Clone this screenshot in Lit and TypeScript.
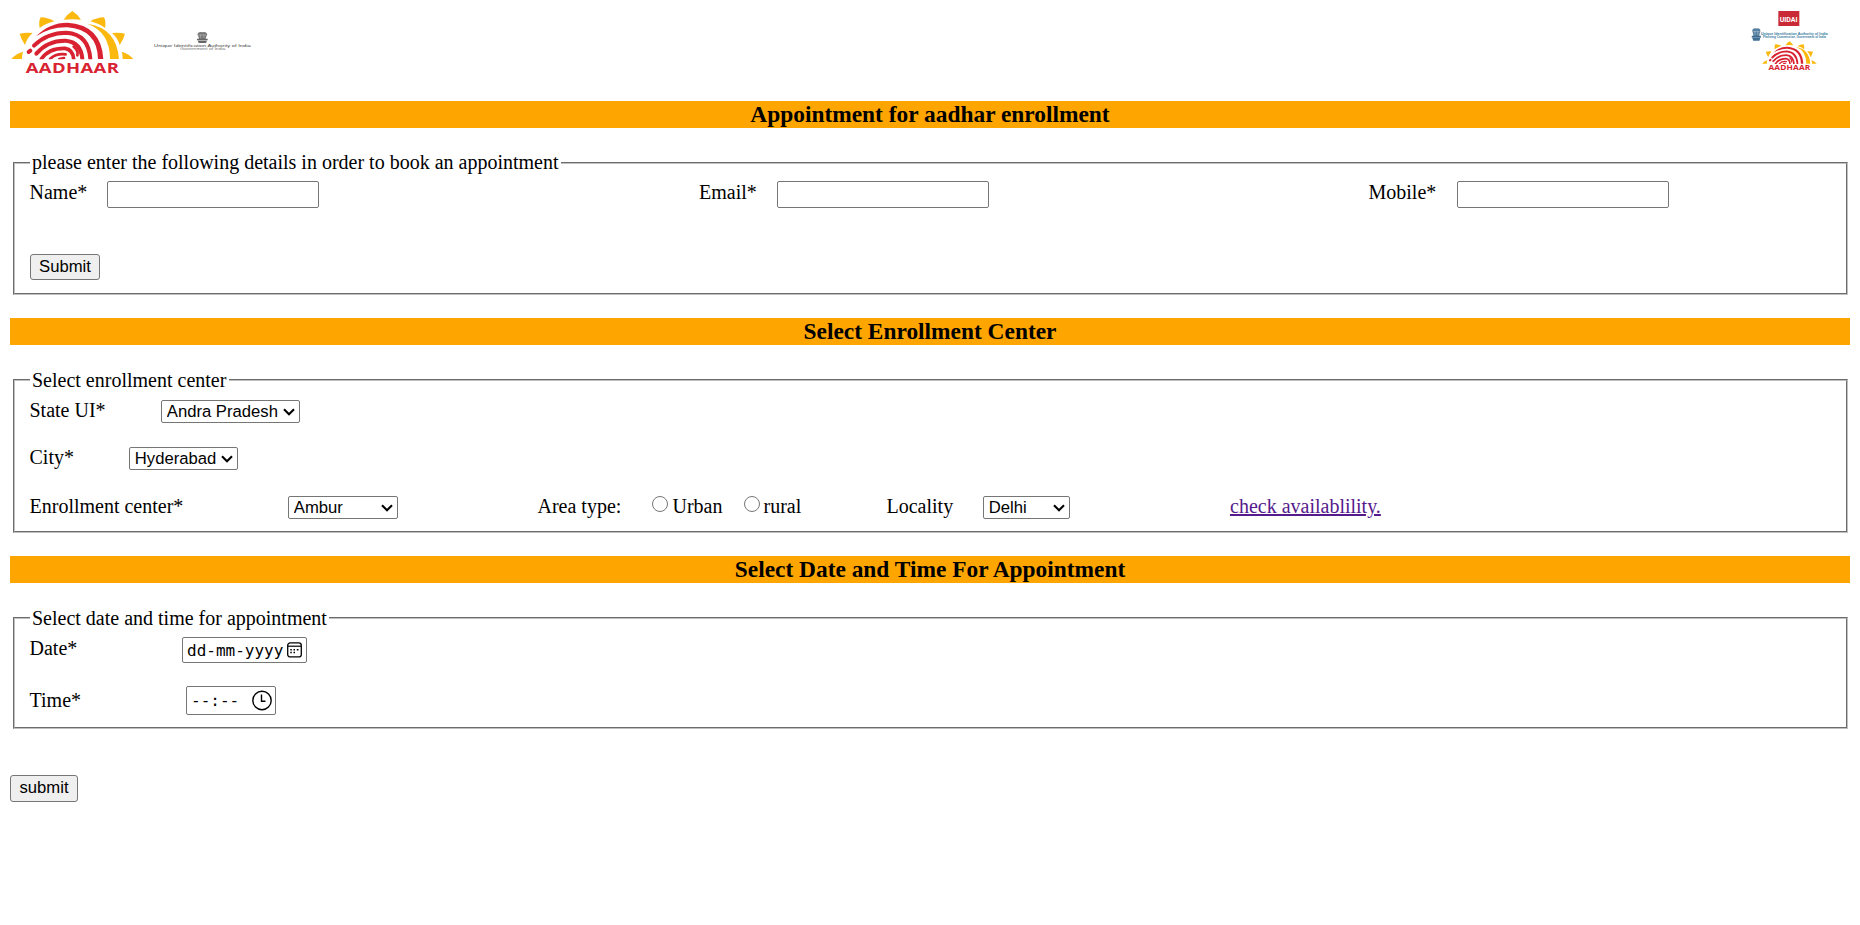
import { LitElement, html, svg, css } from "lit";
import { customElement, property } from "lit/decorators.js";

const sidePetals = () => svg`
  <path d="M122 52Q145 53 163 64Q137 70 119 84Q115 66 122 52Z"/>
  <path d="M59 101Q77 96 98 99Q81 114 75 135Q63 118 59 101Z"/>
  <path d="M34 177Q48 161 69 155Q65 166 66 177Z"/>`;

/* Sun of petals round a fingerprint, over the word mark. */
const aadhaarMark = () => svg`
  <g fill="#fbb80f">
    <path d="M217 33Q233 43 243 59Q217 56 191 59Q201 43 217 33Z"/>
    <g>${sidePetals()}</g>
    <g transform="translate(434 0) scale(-1 1)">${sidePetals()}</g>
    <path d="M262 71Q350 84 357 177H330Q330 96 262 71Z"/>
  </g>
  <path d="M108 109Q148 68 202 68Q304 74 310 177H294Q292 89 202 82Q150 81 108 109Z" fill="#d92231"/>
  <g fill="none" stroke="#d92231" stroke-width="12" stroke-linecap="round">
    <path d="M102 137Q141 98 200 98Q266 103 271 177"/>
    <path d="M86 156L91 152"/>
    <path d="M109 161Q143 121 197 122Q243 126 247 177"/>
    <path d="M124 177Q146 144 195 145Q219 149 221 177" stroke-width="11"/>
    <path d="M221 140Q236 152 232 166" stroke-width="8"/>
    <path d="M150 177Q167 160 197 163" stroke-width="8"/>
    <path d="M178 177L192 174" stroke-width="8"/>
  </g>
  <path d="M60 178H380V187H60Z" fill="#fff"/>
  <text transform="translate(77 218) scale(1.32 1)" textLength="212" class="mark">AADHAAR</text>`;

const emblem = (color: string) => svg`
  <g fill="${color}">
    <path d="M-13-14Q-17-8-12-4L-10 4H10L12-4Q17-8 13-14Q7-18 0-16Q-7-18-13-14Z" opacity=".8"/>
    <path d="M-16 3H16V8H-16Z M-14 9H14L11 16H-11Z" opacity=".9"/>
  </g>
  <path d="M-5-10V2M5-10V2M-12-8H12" stroke="#fff" stroke-width="1.5" opacity=".6"/>`;

@customElement("choice-box")
export class ChoiceBox extends LitElement {
  @property() value = "";

  static styles = css`
    :host { display: grid; height: 23px; }
    .select, .arrow { grid-area: 1 / 1; }
    .select {
      appearance: none;
      box-sizing: border-box;
      width: 100%;
      height: 23px;
      margin: 0;
      padding: 0 0 0 4.8px;
      border: 1px solid #767676;
      border-radius: 2px;
      background: #fff;
      color: #000;
      font: 16.67px "Liberation Sans", Arial, sans-serif;
    }
    .arrow {
      justify-self: end;
      align-self: center;
      margin-right: 5px;
      pointer-events: none;
    }
  `;

  render() {
    return html`
      <select class="select"><option>${this.value}</option></select>
      <svg class="arrow" width="12" height="8" viewBox="0 0 12 8">
        <path d="M1 1.2L6 6.2L11 1.2" fill="none" stroke="#000" stroke-width="2.1"/>
      </svg>`;
  }
}

@customElement("app-root")
export class AppRoot extends LitElement {
  static styles = css`
    :host {
      display: block;
      color: #000;
      background: #fff;
      font: 20px/20px "Liberation Serif", "Times New Roman", serif;
    }
    .page { padding: 0 10px; height: 925px; box-sizing: border-box; overflow: hidden; }
    .header { display: flex; justify-content: space-between; height: 101px; margin: 0 -10px; }
    .header svg { display: block; }
    .mark { font: bold 42px "Open Sans", "Noto Sans", sans-serif; fill: #d92231; }
    .tiny { font: 11px "Liberation Sans", Arial, sans-serif; fill: #444; }
    .planning { font: bold 11px "Liberation Sans", Arial, sans-serif; fill: #387aa0; }
    .uidai { font: bold 24px "Roboto", sans-serif; fill: #fff; }
    .bar {
      height: 27px;
      margin: 0;
      background: orange;
      text-align: center;
      font-size: 23.4px;
      line-height: 27px;
      font-weight: bold;
    }
    .group {
      box-sizing: border-box;
      margin: 24px 2px 23px 3px;
      padding: 0 15px 0 14.5px;
      border: 2px groove #c0c0c0;
      min-width: 0;
    }
    .contact { height: 143px; }
    .center { height: 164px; }
    .schedule { height: 122px; margin-bottom: 46px; }
    .legend { padding: 0 2.5px; margin: 0; height: 22px; white-space: nowrap; }
    .center .legend, .schedule .legend { line-height: 22px; }
    .row { display: grid; align-items: start; white-space: nowrap; }
    .fields { grid-template-columns: 77px 592.5px 77.5px 592px 88px 212px; padding-top: 7px; }
    .fields label, .date label { line-height: 22px; }
    .time label { line-height: 28px; }
    .state { grid-template-columns: 131.5px 139px; padding-top: 9px; }
    .city { grid-template-columns: 99.5px 109px; padding-top: 24px; }
    .place {
      grid-template-columns: 258.5px 110px 139.5px 114px 21px 71px 20px 123px 96.5px 87px 160px auto;
      padding-top: 26px;
    }
    .date { grid-template-columns: 152.5px 125px; padding-top: 8px; }
    .time { grid-template-columns: 156.5px 90px; padding-top: 23px; }
    .text {
      box-sizing: border-box;
      width: 212px;
      height: 27px;
      margin: 0;
      border: 1px solid #767676;
      border-radius: 2px;
      background: #fff;
      font: 16.67px "Liberation Sans", Arial, sans-serif;
    }
    .button {
      display: block;
      box-sizing: border-box;
      padding: 0 0 1px;
      border: 1px solid #767676;
      border-radius: 3px;
      background: #efefef;
      color: #000;
      font: 16.67px "Liberation Sans", Arial, sans-serif;
    }
    .book { width: 70px; height: 26px; margin: 46px 0 0; padding-left: 1px; }
    .finish { width: 68px; height: 27px; }
    .radio { width: 16px; height: 16px; margin: 0; }
    .link { color: #551a8b; text-decoration: underline; }
    .picker {
      display: flex;
      align-items: center;
      justify-content: space-between;
      box-sizing: border-box;
      border: 1px solid #767676;
      border-radius: 2px;
      font: 16px "DejaVu Sans Mono", monospace;
    }
    .day { height: 26px; padding: 0 4px 0 4px; }
    .hour { height: 29px; padding: 0 3px 0 4px; }
  `;

  render() {
    return html`
      <main class="page">
        <header class="header">
          <svg width="280" height="90" viewBox="0 0 840 270">
            ${aadhaarMark()}
            <g transform="translate(607 113)">${emblem("#555")}</g>
            <text class="tiny" x="462" y="140" textLength="290" lengthAdjust="spacingAndGlyphs">Unique Identification Authority of India</text>
            <text class="tiny" x="540" y="151" textLength="136" lengthAdjust="spacingAndGlyphs" opacity=".75">Government of India</text>
          </svg>
          <svg width="130" height="90" viewBox="0 0 390 270">
            <path d="M145 33H208V78H145Z" fill="#c92a35"/>
            <text class="uidai" x="149" y="66" textLength="54" lengthAdjust="spacingAndGlyphs">UIDAI</text>
            <g transform="translate(79 104) scale(.85 1.15)">${emblem("#2c5f88")}</g>
            <text class="planning" x="93" y="104" textLength="200" lengthAdjust="spacingAndGlyphs">Unique Identification Authority of India</text>
            <text class="planning" x="99" y="115" textLength="189" lengthAdjust="spacingAndGlyphs">Planning Commission, Government of India</text>
            <g transform="translate(81 108) scale(.448 .47)">${aadhaarMark()}</g>
          </svg>
        </header>

        <h3 class="bar">Appointment for aadhar enrollment</h3>
        <fieldset class="group contact">
          <legend class="legend">please enter the following details in order to book an appointment</legend>
          <div class="row fields">
            <label>Name*</label><input class="text" />
            <label>Email*</label><input class="text" />
            <label>Mobile*</label><input class="text" />
          </div>
          <button class="button book">Submit</button>
        </fieldset>

        <h3 class="bar">Select Enrollment Center</h3>
        <fieldset class="group center">
          <legend class="legend">Select enrollment center</legend>
          <div class="row state"><label>State UI*</label><choice-box value="Andra Pradesh"></choice-box></div>
          <div class="row city"><label>City*</label><choice-box value="Hyderabad"></choice-box></div>
          <div class="row place">
            <label>Enrollment center*</label><choice-box value="Ambur"></choice-box>
            <span></span><span>Area type:</span>
            <input class="radio" type="radio" name="area" /><label>Urban</label>
            <input class="radio" type="radio" name="area" /><label>rural</label>
            <label>Locality</label><choice-box value="Delhi"></choice-box>
            <span></span><a class="link" href="#">check availablility.</a>
          </div>
        </fieldset>

        <h3 class="bar">Select Date and Time For Appointment</h3>
        <fieldset class="group schedule">
          <legend class="legend">Select date and time for appointment</legend>
          <div class="row date">
            <label>Date*</label>
            <div class="picker day">
              <span>dd-mm-yyyy</span>
              <svg width="15" height="16" viewBox="0 0 15 16">
                <rect x=".7" y=".9" width="13.6" height="14" rx="2.5" fill="none" stroke="#000" stroke-width="1.3"/>
                <path d="M1 4.2H14" stroke="#000" stroke-width="1.2"/>
                <path d="M6.5 7.7H8M9.8 7.7H11.5M3.3 7.7H4.8M3.3 10.5H4.8M6.5 10.5H8" stroke="#000" stroke-width="1.5"/>
              </svg>
            </div>
          </div>
          <div class="row time">
            <label>Time*</label>
            <div class="picker hour">
              <span>--:--</span>
              <svg width="20" height="21" viewBox="0 0 20 21">
                <circle cx="10" cy="10.5" r="9.2" fill="none" stroke="#000" stroke-width="1.4"/>
                <path d="M9.5 4.5V11.2H13.5" fill="none" stroke="#000" stroke-width="1.4"/>
              </svg>
            </div>
          </div>
        </fieldset>
        <button class="button finish">submit</button>
      </main>`;
  }
}
